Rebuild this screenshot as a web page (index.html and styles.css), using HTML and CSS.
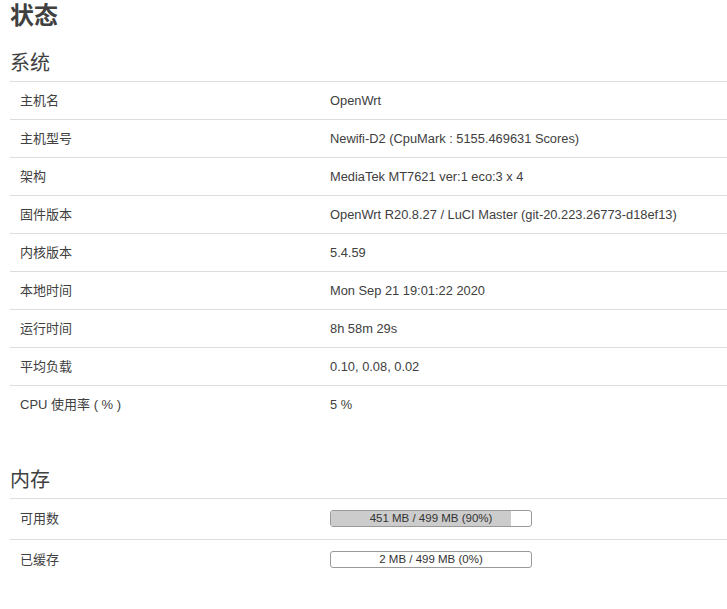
FILE: index.html
```html
<!DOCTYPE html>
<html lang="zh-CN">
<head>
<meta charset="utf-8">
<title>状态</title>
<link rel="stylesheet" href="styles.css">
</head>
<body>
<div class="page">
  <h2 class="page-title">状态</h2>

  <section class="section">
    <h3 class="section-title">系统</h3>
    <div class="table">
      <div class="row"><div class="cell label">主机名</div><div class="cell value">OpenWrt</div></div>
      <div class="row"><div class="cell label">主机型号</div><div class="cell value">Newifi-D2 (CpuMark : 5155.469631 Scores)</div></div>
      <div class="row"><div class="cell label">架构</div><div class="cell value">MediaTek MT7621 ver:1 eco:3 x 4</div></div>
      <div class="row"><div class="cell label">固件版本</div><div class="cell value">OpenWrt R20.8.27 / LuCI Master (git-20.223.26773-d18ef13)</div></div>
      <div class="row"><div class="cell label">内核版本</div><div class="cell value">5.4.59</div></div>
      <div class="row"><div class="cell label">本地时间</div><div class="cell value">Mon Sep 21 19:01:22 2020</div></div>
      <div class="row"><div class="cell label">运行时间</div><div class="cell value">8h 58m 29s</div></div>
      <div class="row"><div class="cell label">平均负载</div><div class="cell value">0.10, 0.08, 0.02</div></div>
      <div class="row"><div class="cell label">CPU 使用率 ( % )</div><div class="cell value">5 %</div></div>
    </div>
  </section>

  <section class="section section-mem">
    <h3 class="section-title">内存</h3>
    <div class="table">
      <div class="row row-bar"><div class="cell label">可用数</div><div class="cell value"><div class="bar"><div class="bar-fill" style="width:90%"></div><span class="bar-text">451 MB / 499 MB (90%)</span></div></div></div>
      <div class="row row-bar"><div class="cell label">已缓存</div><div class="cell value"><div class="bar"><div class="bar-fill" style="width:0%"></div><span class="bar-text">2 MB / 499 MB (0%)</span></div></div></div>
    </div>
  </section>
</div>
</body>
</html>
```

FILE: styles.css
```css
html, body {
  margin: 0;
  padding: 0;
  background: #fff;
}

body {
  font-family: "Liberation Sans", "Noto Sans CJK SC", sans-serif;
  color: #404040;
  font-size: 13px;
}

.page {
  padding-left: 10px;
}

.page-title {
  margin: 0;
  font-size: 24px;
  line-height: 32px;
  font-weight: bold;
  color: #404040;
}

.section {
  margin-top: 13px;
}

.section-mem {
  margin-top: 39px;
}

.section-title {
  margin: 0;
  font-size: 20px;
  line-height: 36px;
  font-weight: normal;
  color: #404040;
}

.table {
  display: flex;
  flex-direction: column;
}

.row {
  display: grid;
  grid-template-columns: 310px 1fr;
  border-top: 1px solid #ddd;
  height: 37px;
  align-items: center;
}

.row-bar {
  height: 40px;
}

.cell {
  padding-left: 10px;
  line-height: 16px;
  white-space: nowrap;
}

.value {
  font-size: 12.85px;
}

.bar {
  position: relative;
  width: 200px;
  height: 15px;
  margin-top: -2px;
  border: 1px solid #999;
  border-radius: 3px;
  background: #fff;
  overflow: hidden;
}

.bar-fill {
  height: 100%;
  background: #ccc;
}

.bar-text {
  position: absolute;
  left: 0;
  right: 0;
  top: 0;
  text-align: center;
  font-size: 11.5px;
  line-height: 15px;
  color: #333;
}
```
